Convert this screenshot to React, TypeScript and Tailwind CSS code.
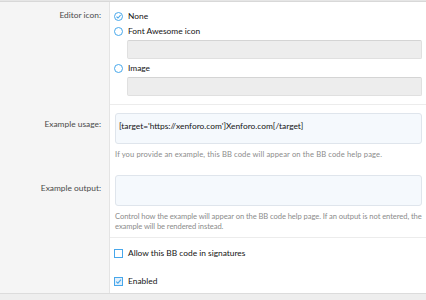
import React from "react";

const font = { fontFamily: 'Lato, "Noto Sans", sans-serif' };

const Radio = ({ checked }: { checked?: boolean }) => (
  <svg viewBox="0 0 9 9" className="h-[9px] w-[9px] shrink-0">
    <circle cx="4.5" cy="4.5" r="4" fill="#fff" stroke="#47a7eb" strokeWidth="1" />
    {checked && <path d="M2.5 4.6 L4 6 L6.6 3.2" fill="none" stroke="#47a7eb" strokeWidth="1.1" />}
  </svg>
);

const Checkbox = ({ checked }: { checked?: boolean }) => (
  <svg viewBox="0 0 9 9" className="h-[9px] w-[9px] shrink-0">
    <rect x="0.5" y="0.5" width="8" height="8" fill={checked ? "#e3f0fb" : "#fff"} stroke="#47a7eb" strokeWidth="1" />
    {checked && <path d="M2.2 4.6 L3.9 6.2 L7 2.6" fill="none" stroke="#47a7eb" strokeWidth="1.1" />}
  </svg>
);

const Input = () => (
  <div className="ml-[13px] mt-[2px] h-[19px] rounded-[2px] border border-solid border-[#e0e0e0] border-t-[#d4d4d4] bg-[#ededed]" />
);

export default function App() {
  return (
    <div style={font} className="h-[300px] w-[426px] overflow-hidden bg-[#eeeeee]">
      <div className="h-[2px] border-b border-solid border-[#d8d8d8] bg-[#e6e6e6]" />
      <div className="bg-white">
        {/* Editor icon */}
        <div className="flex h-[102px]">
          <div className="w-[110px] shrink-0 border-r border-solid border-[#e4e4e4] bg-[#f5f5f5] pr-[8px] pt-[7px] text-right text-[8.4px] text-[#4a4a4a]">
            Editor icon:
          </div>
          <div className="flex-1 pl-[4px] pr-[4px] pt-[7px] text-[8.4px] text-[#141414]">
            <div className="flex h-[14px] items-center gap-[5px]">
              <Radio checked />
              <span>None</span>
            </div>
            <div className="mt-[1px] flex h-[14px] items-center gap-[5px]">
              <Radio />
              <span>Font Awesome icon</span>
            </div>
            <Input />
            <div className="mt-[2px] flex h-[14px] items-center gap-[5px]">
              <Radio />
              <span>Image</span>
            </div>
            <Input />
          </div>
        </div>

        {/* Example usage / output */}
        <div className="flex h-[133px]">
          <div className="w-[110px] shrink-0 border-r border-solid border-[#e4e4e4] bg-[#f5f5f5] pr-[8px] text-right text-[8.4px] text-[#4a4a4a]">
            <div className="pt-[14px]">Example usage:</div>
            <div className="pt-[51px]">Example output:</div>
          </div>
          <div className="flex-1 border-t border-solid border-[#ececec] pl-[5px] pr-[4px] pt-[8px]">
            <div className="h-[31px] rounded-[3px] border border-solid border-[#dfe5ec] bg-[#f5f9fd] px-[3px] pt-[6px] text-[8.4px] text-[#141414]">
              [target='https://xenforo.com']Xenforo.com[/target]
            </div>
            <div className="pt-[5px] text-[7.6px] leading-[10px] tracking-[0.12px] text-[#8c8c8c]">
              If you provide an example, this BB code will appear on the BB code help page.
            </div>
            <div className="mt-[16px] h-[31px] rounded-[3px] border border-solid border-[#dfe5ec] bg-[#f5f9fd]" />
            <div className="pt-[5px] text-[7.6px] leading-[10px] tracking-[-0.08px] text-[#8c8c8c]">
              Control how the example will appear on the BB code help page. If an output is not entered, the example will be rendered instead.
            </div>
          </div>
        </div>

        {/* Checkboxes */}
        <div className="flex h-[57px] border-b border-solid border-[#dcdcdc]">
          <div className="w-[110px] shrink-0 border-r border-solid border-[#e4e4e4] bg-[#f5f5f5]" />
          <div className="flex-1 border-t border-solid border-[#ececec] pl-[4px] pt-[8px] text-[8.4px] text-[#141414]">
            <div className="flex h-[14px] items-center gap-[5px]">
              <Checkbox />
              <span>Allow this BB code in signatures</span>
            </div>
            <div className="mt-[14px] flex h-[14px] items-center gap-[5px]">
              <Checkbox checked />
              <span>Enabled</span>
            </div>
          </div>
        </div>
      </div>
    </div>
  );
}
